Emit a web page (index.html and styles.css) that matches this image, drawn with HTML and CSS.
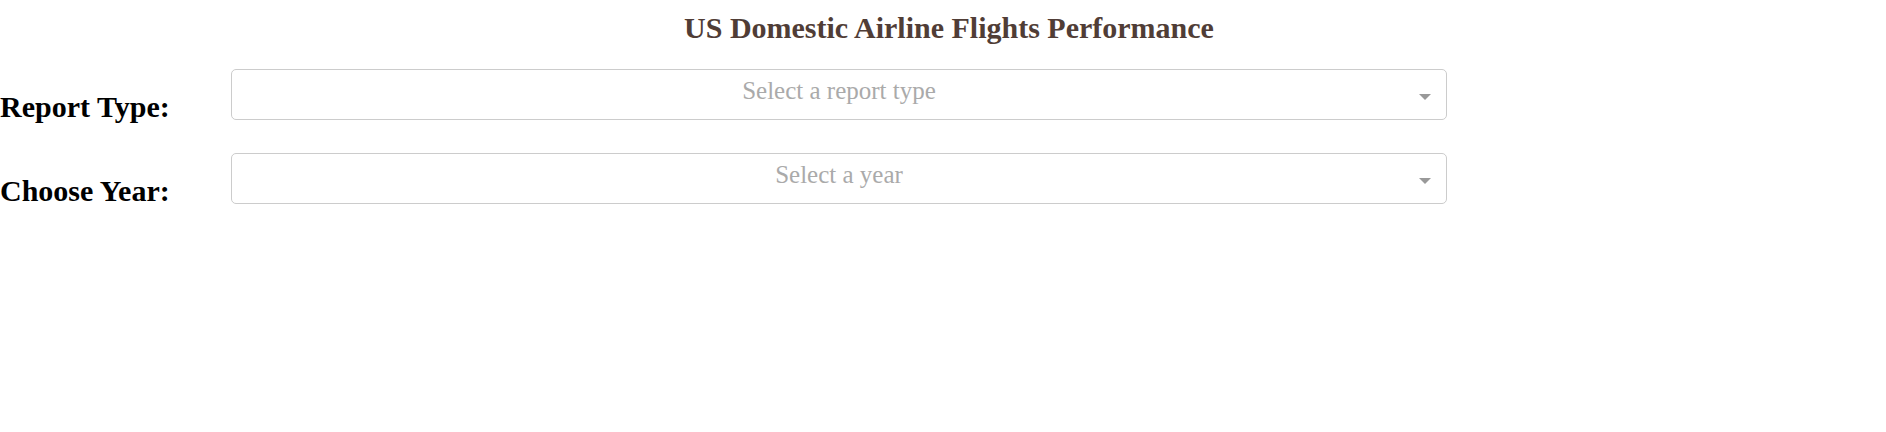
FILE: index.html
```html
<!DOCTYPE html>
<html lang="en">
<head>
<meta charset="utf-8">
<title>US Domestic Airline Flights Performance</title>
<link rel="stylesheet" href="styles.css">
</head>
<body>
<div class="app">
  <h1 class="title">US Domestic Airline Flights Performance</h1>
  <div class="row">
    <h2 class="label">Report Type:</h2>
    <div class="dropdown">
      <div class="control">
        <div class="placeholder">Select a report type</div>
        <span class="arrow"></span>
      </div>
    </div>
  </div>
  <div class="row">
    <h2 class="label">Choose Year:</h2>
    <div class="dropdown">
      <div class="control">
        <div class="placeholder">Select a year</div>
        <span class="arrow"></span>
      </div>
    </div>
  </div>
</div>
</body>
</html>
```

FILE: styles.css
```css
html, body {
  margin: 0;
  padding: 0;
  background: #ffffff;
}

body {
  font-family: "Liberation Serif", "Times New Roman", serif;
  color: #000000;
}

.title {
  margin: 11px 0 20px;
  padding-left: 12px;
  font-size: 30px;
  line-height: 34px;
  font-weight: bold;
  text-align: center;
  color: #503D36;
}

.row {
  display: flex;
  align-items: flex-start;
}

.label {
  flex: 0 0 231px;
  margin: 25px 0;
  font-size: 30px;
  line-height: 34px;
  font-weight: bold;
  white-space: nowrap;
}

.dropdown {
  flex: 0 0 1216px;
  margin-top: 4px;
}

.control {
  display: grid;
  grid-template-columns: 1fr;
  height: 49px;
  border: 1px solid #cccccc;
  border-radius: 5px;
  background: #ffffff;
}

.placeholder {
  grid-area: 1 / 1;
  align-self: start;
  font-size: 25px;
  line-height: 42px;
  color: #aaaaaa;
  text-align: center;
  padding: 0 12px;
}

.arrow {
  grid-area: 1 / 1;
  justify-self: end;
  align-self: start;
  margin-top: 24px;
  margin-right: 15px;
  width: 0;
  height: 0;
  border-top: 6px solid #999999;
  border-left: 6.5px solid transparent;
  border-right: 6.5px solid transparent;
}
```
